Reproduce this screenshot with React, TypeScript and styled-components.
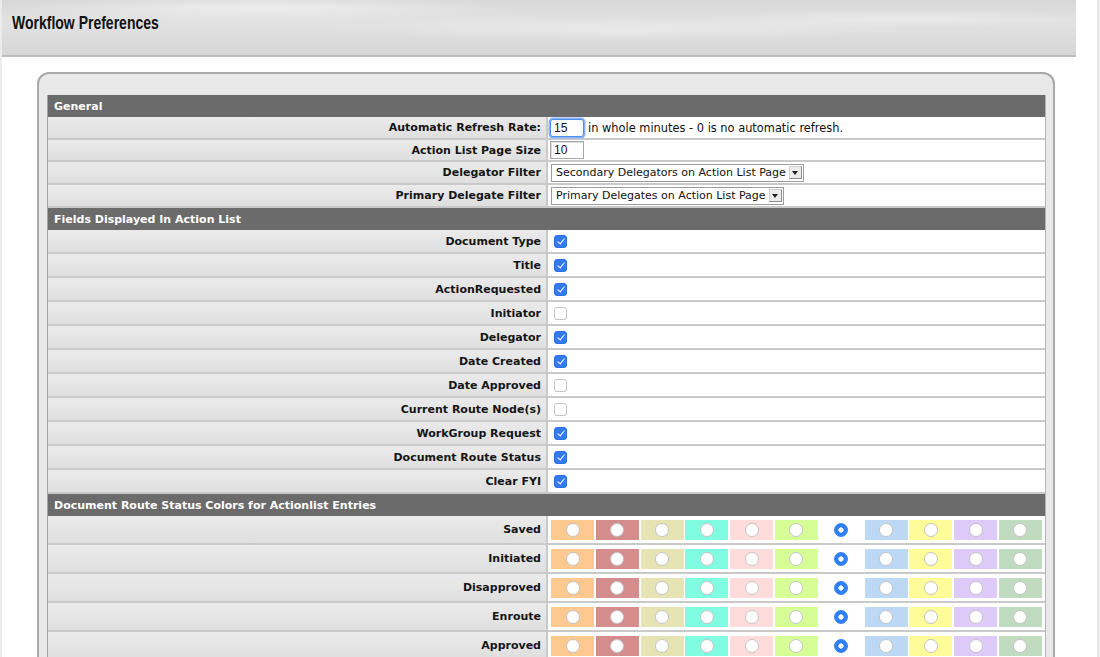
import React from 'react';
import styled, { createGlobalStyle } from 'styled-components';

const GlobalStyle = createGlobalStyle`
  html, body {
    margin: 0;
    padding: 0;
    background: #fff;
  }
  body {
    font-family: 'DejaVu Sans', Verdana, sans-serif;
    font-size: 11px;
    color: #111;
  }
`;

const PageFrame = styled.div`
  width: 1100px;
  min-height: 657px;
  box-sizing: border-box;
  border-left: 2px solid #ececec;
  border-right: 3px solid #ececec;
  padding-right: 21px;
`;

const Header = styled.header`
  height: 57px;
  display: flex;
  align-items: center;
  padding: 0 0 8px 10px;
  box-sizing: border-box;
  border-bottom: 2px solid #bcbcbc;
  background:
    radial-gradient(ellipse 260px 14px at 260px 8px, rgba(255, 255, 255, 0.5), transparent),
    radial-gradient(ellipse 320px 12px at 620px 30px, rgba(255, 255, 255, 0.3), transparent),
    radial-gradient(ellipse 200px 10px at 900px 18px, rgba(255, 255, 255, 0.3), transparent),
    linear-gradient(180deg, #d8d8d8 0%, #e2e2e2 40%, #d6d6d6 100%);
`;

const Title = styled.h1`
  margin: 0;
  font: bold 17.5px 'Liberation Sans', Arial, sans-serif;
  color: #111;
  transform: scaleX(0.8);
  transform-origin: left center;
  white-space: nowrap;
`;

const Panel = styled.div`
  margin: 15px 0 0 35px;
  width: 1018px;
  box-sizing: border-box;
  border: 2px solid #a9a9a9;
  border-bottom: none;
  border-radius: 12px 12px 0 0;
  background: #e9e9e9;
  padding: 21px 7px 20px 8px;
`;

const Sheet = styled.div`
  border-left: 1px solid #a4a4a4;
  border-right: 1px solid #b4b4b4;
  background: #fff;
`;

const SectionHead = styled.div`
  height: 22px;
  display: flex;
  align-items: center;
  padding-left: 6px;
  background: #6b6b6b;
  color: #fff;
  font-weight: bold;
`;

const Row = styled.div<{ $h: number }>`
  display: grid;
  grid-template-columns: 500px 1fr;
  height: ${(p) => p.$h}px;
  box-sizing: border-box;
  border-bottom: 2px solid #c9c9c9;
`;

const Label = styled.div`
  display: flex;
  align-items: center;
  justify-content: flex-end;
  padding-right: 5px;
  box-sizing: border-box;
  border-right: 2px solid #c9c9c9;
  background: linear-gradient(180deg, #ebebeb 0%, #dfdfdf 100%);
  font-weight: bold;
  color: #151515;
`;

const Value = styled.div<{ $pad?: number }>`
  display: flex;
  align-items: center;
  gap: 4px;
  padding-left: ${(p) => p.$pad ?? 1}px;
  background: #fff;
  white-space: nowrap;
`;

const Hint = styled.span`
  font-size: 11.4px;
  color: #111;
`;

const TextBox = styled.input<{ $focus?: boolean }>`
  width: 34px;
  height: 18px;
  box-sizing: border-box;
  margin: 0 0 0 1px;
  padding: 0 3px;
  font: 12px 'Liberation Sans', Arial, sans-serif;
  color: #111;
  border: 1px solid ${(p) => (p.$focus ? '#4d8ff0' : '#a8a8a8')};
  border-radius: ${(p) => (p.$focus ? '3px' : '0')};
  box-shadow: ${(p) => (p.$focus ? '0 0 0 1.5px #86b4f5' : 'inset 1px 1px 0 #ddd')};
  outline: none;
`;

const Dropdown = styled.div`
  display: inline-flex;
  align-items: center;
  height: 18px;
  box-sizing: border-box;
  margin-left: 2px;
  padding: 0 1px 0 4px;
  border: 1px solid #9c9c9c;
  background: #fff;
  color: #111;
`;

const DropArrow = styled.span`
  display: inline-flex;
  align-items: center;
  justify-content: center;
  width: 13px;
  height: 13px;
  margin-left: 3px;
  box-sizing: border-box;
  border: 1px solid #8a8a8a;
  border-top-color: #cfcfcf;
  border-left-color: #cfcfcf;
  background: #ececec;

  &::after {
    content: '';
    border-left: 3px solid transparent;
    border-right: 3px solid transparent;
    border-top: 4px solid #222;
  }
`;

const Check = styled.input`
  appearance: none;
  width: 13px;
  height: 13px;
  margin: 1px 0 0;
  box-sizing: border-box;
  border: 1px solid #c4c4c4;
  border-radius: 3px;
  background: #fff;
  position: relative;

  &:checked {
    background: #2f7cf6;
    border-color: #2a72e6;
  }
  &:checked::after {
    content: '';
    position: absolute;
    left: 3.5px;
    top: 1px;
    width: 3px;
    height: 6px;
    border-right: 1.6px solid #fff;
    border-bottom: 1.6px solid #fff;
    transform: rotate(40deg);
  }
`;

const Swatches = styled.div`
  display: flex;
  gap: 1.8px;
`;

const Swatch = styled.label<{ $color: string }>`
  width: 43px;
  height: 20px;
  display: flex;
  align-items: center;
  justify-content: center;
  background: ${(p) => p.$color};
`;

const Radio = styled.input`
  appearance: none;
  width: 14px;
  height: 14px;
  margin: 0;
  box-sizing: border-box;
  border-radius: 50%;
  border: 1px solid #c3c3c3;
  background: #fff;

  &:checked {
    border-color: #2f7ff6;
    background: radial-gradient(circle, #fff 0 2.3px, #2f7ff6 2.9px);
  }
`;

const fieldRows: [string, boolean][] = [
  ['Document Type', true],
  ['Title', true],
  ['ActionRequested', true],
  ['Initiator', false],
  ['Delegator', true],
  ['Date Created', true],
  ['Date Approved', false],
  ['Current Route Node(s)', false],
  ['WorkGroup Request', true],
  ['Document Route Status', true],
  ['Clear FYI', true],
];

const palette = [
  '#fec891',
  '#d48c8c',
  '#e6e3b5',
  '#80fde0',
  '#ffdcdc',
  '#d6fd96',
  'transparent',
  '#bcd8f4',
  '#fdfc99',
  '#decaf8',
  '#c0dbbf',
];

const statuses = ['Saved', 'Initiated', 'Disapproved', 'Enroute', 'Approved'];

function App() {
  return (
    <PageFrame>
      <GlobalStyle />
      <Header>
        <Title>Workflow Preferences</Title>
      </Header>
      <Panel>
        <Sheet>
          <SectionHead>General</SectionHead>
          <Row $h={23}>
            <Label>Automatic Refresh Rate:</Label>
            <Value>
              <TextBox $focus defaultValue="15" />
              <Hint>in whole minutes - 0 is no automatic refresh.</Hint>
            </Value>
          </Row>
          <Row $h={22}>
            <Label>Action List Page Size</Label>
            <Value>
              <TextBox defaultValue="10" />
            </Value>
          </Row>
          <Row $h={23}>
            <Label>Delegator Filter</Label>
            <Value>
              <Dropdown>
                Secondary Delegators on Action List Page
                <DropArrow />
              </Dropdown>
            </Value>
          </Row>
          <Row $h={23}>
            <Label>Primary Delegate Filter</Label>
            <Value>
              <Dropdown>
                Primary Delegates on Action List Page
                <DropArrow />
              </Dropdown>
            </Value>
          </Row>

          <SectionHead>Fields Displayed In Action List</SectionHead>
          {fieldRows.map(([name, on]) => (
            <Row $h={24} key={name}>
              <Label>{name}</Label>
              <Value $pad={6}>
                <Check type="checkbox" defaultChecked={on} />
              </Value>
            </Row>
          ))}

          <SectionHead>Document Route Status Colors for Actionlist Entries</SectionHead>
          {statuses.map((status) => (
            <Row $h={29} key={status}>
              <Label>{status}</Label>
              <Value $pad={3}>
                <Swatches>
                  {palette.map((color, i) => (
                    <Swatch $color={color} key={i}>
                      <Radio type="radio" name={status} defaultChecked={i === 6} />
                    </Swatch>
                  ))}
                </Swatches>
              </Value>
            </Row>
          ))}
        </Sheet>
      </Panel>
    </PageFrame>
  );
}

export default App;
